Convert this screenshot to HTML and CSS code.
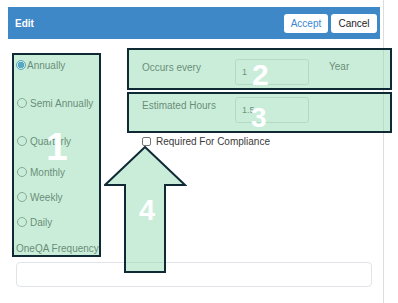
FILE: index.html
```html
<!DOCTYPE html>
<html lang="en">
<head>
    <meta charset="UTF-8">
    <meta name="viewport" content="width=device-width, initial-scale=1.0">
    <title>Edit Frequency</title>
    <link rel="stylesheet" href="styles.css">
</head>
<body>
    <div class="page">
        <div class="header">
            <span class="title">Edit</span>
            <div class="actions">
                <button class="btn btn-accept">Accept</button>
                <button class="btn">Cancel</button>
            </div>
        </div>

        <div class="form">
            <div class="frequency">
                <label class="option"><span class="radio checked"></span>Annually</label>
                <label class="option"><span class="radio"></span>Semi Annually</label>
                <label class="option"><span class="radio"></span>Quarterly</label>
                <label class="option"><span class="radio"></span>Monthly</label>
                <label class="option"><span class="radio"></span>Weekly</label>
                <label class="option"><span class="radio"></span>Daily</label>
                <div class="caption">OneQA Frequency</div>
            </div>

            <div class="fields">
                <div class="field-row">
                    <span class="field-label">Occurs every</span>
                    <input class="field-input" type="text" value="1">
                    <span class="unit">Year</span>
                </div>
                <div class="field-row">
                    <span class="field-label">Estimated Hours</span>
                    <input class="field-input" type="text" value="1.5">
                </div>
                <label class="check-row"><span class="checkbox"></span>Required For Compliance</label>
            </div>
        </div>

        <input class="notes" type="text">

        <!-- annotation overlays -->
        <div class="mark mark-1"><span class="num num-1">1</span></div>
        <div class="mark mark-2"><span class="num num-2">2</span></div>
        <div class="mark mark-3"><span class="num num-3">3</span></div>
        <svg class="arrow" width="83" height="128" viewBox="0 0 83 128">
            <polygon points="41,1 81,39 61,39 61,126 21,126 21,39 1,39"
                     fill="rgba(150,220,180,0.5)" stroke="#0f2a35" stroke-width="2"/>
        </svg>
        <span class="num num-4">4</span>
    </div>
</body>
</html>
```

FILE: styles.css
```css
html, body {
    overflow: hidden;
}

body {
    margin: 0;
    font-family: "Liberation Sans", Arial, sans-serif;
    font-size: 10px;
    color: #3a3a3a;
    background: #fff;
}

.page {
    position: relative;
    margin-left: 8px;
    width: 376px;
    height: 303px;
    border-right: 1px solid #dcdcdc;
    box-sizing: border-box;
    padding-top: 7px;
}

.header {
    height: 32px;
    width: 372px;
    background: #3f88c8;
    display: flex;
    align-items: center;
    justify-content: space-between;
    padding: 0 3px 0 7px;
    box-sizing: border-box;
}

.title {
    color: #fff;
    font-weight: bold;
    font-size: 10px;
}

.actions {
    display: flex;
    gap: 3px;
}

.btn {
    height: 19px;
    padding: 0;
    border: none;
    border-radius: 3px;
    background: #fff;
    font-family: inherit;
    font-size: 10px;
    color: #222;
    width: 46px;
}

.btn-accept {
    width: 44px;
    color: #3a86d0;
}

.form {
    display: flex;
}

.frequency {
    width: 112px;
    padding: 7px 0 0 8px;
    box-sizing: border-box;
    display: grid;
    grid-template-rows: 38px 38px 38px 24px 26px 24px 28px;
}

.option {
    display: flex;
    align-items: center;
}

.option .radio {
    width: 8px;
    height: 8px;
    border: 1px solid #777;
    border-radius: 50%;
    margin: 0 3px 0 1px;
}

.option .radio.checked {
    border-color: #1a73d0;
    margin: 0 1px 0 0;
    background: radial-gradient(circle, #1a73d0 0 3px, #fff 3.5px);
}

.caption {
    display: flex;
    align-items: center;
}

.fields {
    padding: 20px 0 0 22px;
    display: flex;
    flex-direction: column;
}

.field-row {
    display: flex;
    align-items: flex-start;
    height: 38px;
}

.field-label {
    width: 93px;
    padding-top: 3px;
}

.field-input {
    width: 74px;
    height: 26px;
    box-sizing: border-box;
    border: 1px solid #d0d8d4;
    border-radius: 3px;
    padding: 0 6px;
    font-family: inherit;
    font-size: 9px;
    color: #444;
    background: #fff;
}

.unit {
    margin-left: 20px;
    padding-top: 2px;
}

.check-row {
    display: flex;
    align-items: center;
    height: 12px;
}

.checkbox {
    width: 7px;
    height: 7px;
    border: 1px solid #777;
    border-radius: 2px;
    margin-right: 5px;
}

.notes {
    display: block;
    margin: 0 0 0 8px;
    width: 356px;
    height: 25px;
    box-sizing: border-box;
    border: 1px solid #e0e3e8;
    border-radius: 4px;
    background: #fff;
}

.mark {
    position: absolute;
    box-sizing: border-box;
    border: 2px solid #0f2a35;
    background: rgba(150, 220, 180, 0.5);
    pointer-events: none;
}

.mark-1 {
    left: 4px;
    top: 53px;
    width: 89px;
    height: 204px;
}

.mark-2 {
    left: 119px;
    top: 48px;
    width: 265px;
    height: 42px;
}

.mark-3 {
    left: 119px;
    top: 92px;
    width: 265px;
    height: 41px;
}

.arrow {
    position: absolute;
    left: 96px;
    top: 146px;
}

.num {
    position: absolute;
    color: #fff;
    font-weight: bold;
    line-height: 1;
}

.num-1 {
    font-size: 39px;
    left: 32px;
    top: 72px;
}

.num-2 {
    font-size: 30px;
    left: 123px;
    top: 10px;
}

.num-3 {
    font-size: 28px;
    left: 122px;
    top: 10px;
}

.num-4 {
    font-size: 29px;
    left: 131px;
    top: 196px;
}
```
